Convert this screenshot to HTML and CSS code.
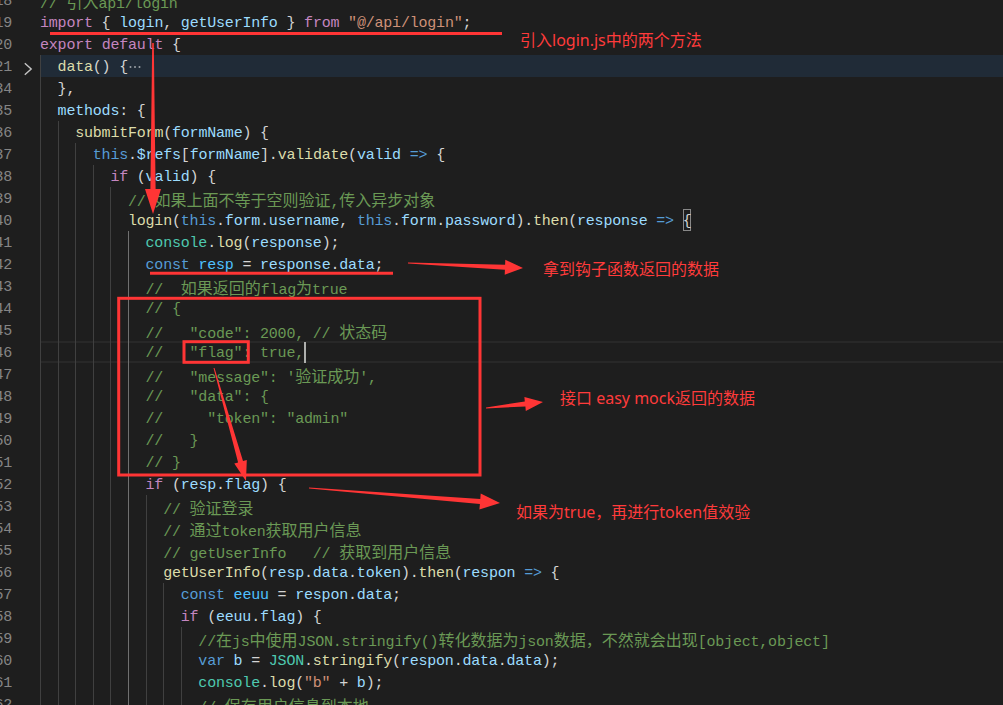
FILE: index.html
```html
<!DOCTYPE html>
<html lang="zh-CN">
<head>
<meta charset="utf-8">
<title>login.vue</title>
<link rel="stylesheet" href="styles.css">
</head>
<body>
<div class="editor">
<div class="row"><span class="ln"><span class="num">18</span></span><span class="fold"></span><span class="code"><span class="c">// <span class="cj">引入</span>api/login</span></span></div>
<div class="row"><span class="ln"><span class="num">19</span></span><span class="fold"></span><span class="code"><span class="k">import</span> { <span class="v">login</span>, <span class="v">getUserInfo</span> } <span class="k">from</span> <span class="s">"@/api/login"</span>;</span></div>
<div class="row"><span class="ln"><span class="num">20</span></span><span class="fold"></span><span class="code"><span class="k">export</span> <span class="k">default</span> {</span></div>
<div class="row"><span class="ln"><span class="num">21</span></span><span class="fold"><svg class="chev" width="10" height="14" viewBox="0 0 10 14"><path d="M1.8 1.2 L8.2 7 L1.8 12.8" fill="none" stroke="#c5c5c5" stroke-width="1.4"/></svg></span><span class="code hl"><i class="g"></i><span class="f">data</span>() {<svg class="dots" width="14" height="22" viewBox="0 0 14 22"><circle cx="2.5" cy="12" r="1" fill="#9aa0a6"/><circle cx="7" cy="12" r="1" fill="#9aa0a6"/><circle cx="11.5" cy="12" r="1" fill="#9aa0a6"/></svg></span></div>
<div class="row"><span class="ln"><span class="num">34</span></span><span class="fold"></span><span class="code"><i class="g"></i>},</span></div>
<div class="row"><span class="ln"><span class="num">35</span></span><span class="fold"></span><span class="code"><i class="g"></i><span class="v">methods</span>: {</span></div>
<div class="row"><span class="ln"><span class="num">36</span></span><span class="fold"></span><span class="code"><i class="g"></i><i class="g"></i><span class="f">submitForm</span>(<span class="v">formName</span>) {</span></div>
<div class="row"><span class="ln"><span class="num">37</span></span><span class="fold"></span><span class="code"><i class="g"></i><i class="g"></i><i class="g"></i><span class="b">this</span>.<span class="v">$refs</span>[<span class="v">formName</span>].<span class="f">validate</span>(<span class="v">valid</span> <span class="b">=&gt;</span> {</span></div>
<div class="row"><span class="ln"><span class="num">38</span></span><span class="fold"></span><span class="code"><i class="g"></i><i class="g"></i><i class="g"></i><i class="g"></i><span class="k">if</span> (<span class="v">valid</span>) {</span></div>
<div class="row"><span class="ln"><span class="num">39</span></span><span class="fold"></span><span class="code"><i class="g"></i><i class="g"></i><i class="g"></i><i class="g"></i><i class="g"></i><span class="c">// <span class="cj">如果上面不等于空则验证</span>,<span class="cj">传入异步对象</span></span></span></div>
<div class="row"><span class="ln"><span class="num">40</span></span><span class="fold"></span><span class="code"><i class="g"></i><i class="g"></i><i class="g"></i><i class="g"></i><i class="g"></i><span class="f">login</span>(<span class="b">this</span>.<span class="v">form</span>.<span class="v">username</span>, <span class="b">this</span>.<span class="v">form</span>.<span class="v">password</span>).<span class="f">then</span>(<span class="v">response</span> <span class="b">=&gt;</span> <span class="bm">{</span></span></div>
<div class="row"><span class="ln"><span class="num">41</span></span><span class="fold"></span><span class="code"><i class="g"></i><i class="g"></i><i class="g"></i><i class="g"></i><i class="g"></i><i class="g a"></i><span class="t">console</span>.<span class="f">log</span>(<span class="v">response</span>);</span></div>
<div class="row"><span class="ln"><span class="num">42</span></span><span class="fold"></span><span class="code"><i class="g"></i><i class="g"></i><i class="g"></i><i class="g"></i><i class="g"></i><i class="g a"></i><span class="b">const</span> <span class="cn">resp</span> = <span class="v">response</span>.<span class="v">data</span>;</span></div>
<div class="row"><span class="ln"><span class="num">43</span></span><span class="fold"></span><span class="code"><i class="g"></i><i class="g"></i><i class="g"></i><i class="g"></i><i class="g"></i><i class="g a"></i><span class="c">//  <span class="cj">如果返回的</span>flag<span class="cj">为</span>true</span></span></div>
<div class="row"><span class="ln"><span class="num">44</span></span><span class="fold"></span><span class="code"><i class="g"></i><i class="g"></i><i class="g"></i><i class="g"></i><i class="g"></i><i class="g a"></i><span class="c">// {</span></span></div>
<div class="row"><span class="ln"><span class="num">45</span></span><span class="fold"></span><span class="code"><i class="g"></i><i class="g"></i><i class="g"></i><i class="g"></i><i class="g"></i><i class="g a"></i><span class="c">//   "code": 2000, // <span class="cj">状态码</span></span></span></div>
<div class="row"><span class="ln"><span class="num">46</span></span><span class="fold"></span><span class="code cur"><i class="g"></i><i class="g"></i><i class="g"></i><i class="g"></i><i class="g"></i><i class="g a"></i><span class="c">//   "flag": true,</span><i class="caret"></i></span></div>
<div class="row"><span class="ln"><span class="num">47</span></span><span class="fold"></span><span class="code"><i class="g"></i><i class="g"></i><i class="g"></i><i class="g"></i><i class="g"></i><i class="g a"></i><span class="c">//   "message": '<span class="cj">验证成功</span>',</span></span></div>
<div class="row"><span class="ln"><span class="num">48</span></span><span class="fold"></span><span class="code"><i class="g"></i><i class="g"></i><i class="g"></i><i class="g"></i><i class="g"></i><i class="g a"></i><span class="c">//   "data": {</span></span></div>
<div class="row"><span class="ln"><span class="num">49</span></span><span class="fold"></span><span class="code"><i class="g"></i><i class="g"></i><i class="g"></i><i class="g"></i><i class="g"></i><i class="g a"></i><span class="c">//     "token": "admin"</span></span></div>
<div class="row"><span class="ln"><span class="num">50</span></span><span class="fold"></span><span class="code"><i class="g"></i><i class="g"></i><i class="g"></i><i class="g"></i><i class="g"></i><i class="g a"></i><span class="c">//   }</span></span></div>
<div class="row"><span class="ln"><span class="num">51</span></span><span class="fold"></span><span class="code"><i class="g"></i><i class="g"></i><i class="g"></i><i class="g"></i><i class="g"></i><i class="g a"></i><span class="c">// }</span></span></div>
<div class="row"><span class="ln"><span class="num">52</span></span><span class="fold"></span><span class="code"><i class="g"></i><i class="g"></i><i class="g"></i><i class="g"></i><i class="g"></i><i class="g a"></i><span class="k">if</span> (<span class="v">resp</span>.<span class="v">flag</span>) {</span></div>
<div class="row"><span class="ln"><span class="num">53</span></span><span class="fold"></span><span class="code"><i class="g"></i><i class="g"></i><i class="g"></i><i class="g"></i><i class="g"></i><i class="g a"></i><i class="g"></i><span class="c">// <span class="cj">验证登录</span></span></span></div>
<div class="row"><span class="ln"><span class="num">54</span></span><span class="fold"></span><span class="code"><i class="g"></i><i class="g"></i><i class="g"></i><i class="g"></i><i class="g"></i><i class="g a"></i><i class="g"></i><span class="c">// <span class="cj">通过</span>token<span class="cj">获取用户信息</span></span></span></div>
<div class="row"><span class="ln"><span class="num">55</span></span><span class="fold"></span><span class="code"><i class="g"></i><i class="g"></i><i class="g"></i><i class="g"></i><i class="g"></i><i class="g a"></i><i class="g"></i><span class="c">// getUserInfo   // <span class="cj">获取到用户信息</span></span></span></div>
<div class="row"><span class="ln"><span class="num">56</span></span><span class="fold"></span><span class="code"><i class="g"></i><i class="g"></i><i class="g"></i><i class="g"></i><i class="g"></i><i class="g a"></i><i class="g"></i><span class="f">getUserInfo</span>(<span class="v">resp</span>.<span class="v">data</span>.<span class="v">token</span>).<span class="f">then</span>(<span class="v">respon</span> <span class="b">=&gt;</span> {</span></div>
<div class="row"><span class="ln"><span class="num">57</span></span><span class="fold"></span><span class="code"><i class="g"></i><i class="g"></i><i class="g"></i><i class="g"></i><i class="g"></i><i class="g a"></i><i class="g"></i><i class="g"></i><span class="b">const</span> <span class="cn">eeuu</span> = <span class="v">respon</span>.<span class="v">data</span>;</span></div>
<div class="row"><span class="ln"><span class="num">58</span></span><span class="fold"></span><span class="code"><i class="g"></i><i class="g"></i><i class="g"></i><i class="g"></i><i class="g"></i><i class="g a"></i><i class="g"></i><i class="g"></i><span class="k">if</span> (<span class="v">eeuu</span>.<span class="v">flag</span>) {</span></div>
<div class="row"><span class="ln"><span class="num">59</span></span><span class="fold"></span><span class="code"><i class="g"></i><i class="g"></i><i class="g"></i><i class="g"></i><i class="g"></i><i class="g a"></i><i class="g"></i><i class="g"></i><i class="g"></i><span class="c">//<span class="cj">在</span>js<span class="cj">中使用</span>JSON.stringify()<span class="cj">转化数据为</span>json<span class="cj">数据，不然就会出现</span>[object,object]</span></span></div>
<div class="row"><span class="ln"><span class="num">60</span></span><span class="fold"></span><span class="code"><i class="g"></i><i class="g"></i><i class="g"></i><i class="g"></i><i class="g"></i><i class="g a"></i><i class="g"></i><i class="g"></i><i class="g"></i><span class="b">var</span> <span class="v">b</span> = <span class="t">JSON</span>.<span class="f">stringify</span>(<span class="v">respon</span>.<span class="v">data</span>.<span class="v">data</span>);</span></div>
<div class="row"><span class="ln"><span class="num">61</span></span><span class="fold"></span><span class="code"><i class="g"></i><i class="g"></i><i class="g"></i><i class="g"></i><i class="g"></i><i class="g a"></i><i class="g"></i><i class="g"></i><i class="g"></i><span class="t">console</span>.<span class="f">log</span>(<span class="s">"b"</span> + <span class="v">b</span>);</span></div>
<div class="row"><span class="ln"><span class="num">62</span></span><span class="fold"></span><span class="code"><i class="g"></i><i class="g"></i><i class="g"></i><i class="g"></i><i class="g"></i><i class="g a"></i><i class="g"></i><i class="g"></i><i class="g"></i><span class="c">// <span class="cj">保存用户信息到本地</span></span></span></div>
</div>

<div class="marks">
<svg class="ink" width="1003" height="705" viewBox="0 0 1003 705">
<g fill="none" stroke="#ff3535" stroke-width="3">
<line x1="50" y1="33.5" x2="502" y2="33.5"/>
<line x1="150" y1="273.3" x2="393" y2="273.3"/>
<rect x="118.7" y="298.3" width="361.3" height="176.7"/>
<rect x="184" y="341.7" width="64.3" height="20.6"/>
</g>
<g fill="#ff3535">
<polygon points="153.8,43 155.6,189 161,189 153,214 145,189 150.4,189 152.2,43"/>
<polygon points="408,263.5 504.9,269.7 504.7,274.7 523,268 505.3,259.7 505.1,264.7 408,262.5"/>
<polygon points="213.5,368.1 238.1,462.4 234.3,463.5 246,481 246.8,460 243,461.1 214.5,367.9"/>
<polygon points="486,408.5 525.4,406.4 525.8,410.9 543,402 524.4,396.9 524.8,401.4 486,407.5"/>
<polygon points="309,488.5 479.9,503.9 479.4,509.4 500,503 480.7,493.5 480.3,498.9 309,487.5"/>
</g>
</svg>
<div class="note n1">引入login.js中的两个方法</div>
<div class="note n2">拿到钩子函数返回的数据</div>
<div class="note n3">接口 easy mock返回的数据</div>
<div class="note n4">如果为true，再进行token值效验</div>
</div>
</body>
</html>
```

FILE: styles.css
```css
html, body {
  margin: 0;
  padding: 0;
  background: #1e1e1e;
}

body {
  width: 1003px;
  height: 705px;
  overflow: hidden;
  position: relative;
}

.editor {
  display: flex;
  flex-direction: column;
  margin-top: -11px;
  font-family: "Liberation Mono", "Noto Sans CJK SC", monospace;
  font-size: 15px;
  letter-spacing: -0.2px;
}

.row {
  display: flex;
  height: 22px;
  flex: none;
}

.ln {
  width: 12px;
  flex: none;
  display: flex;
  justify-content: flex-end;
  overflow: hidden;
  color: #858585;
  line-height: 25px;
}

.num {
  white-space: nowrap;
}

.fold {
  width: 28px;
  flex: none;
  display: flex;
  align-items: flex-start;
  padding-left: 11px;
  box-sizing: border-box;
}

.chev {
  margin-top: 7px;
  display: block;
}

.code {
  flex: 1;
  min-width: 0;
  white-space: pre;
  color: #d4d4d4;
  line-height: 25px;
}

.code.hl {
  background: #202b37;
}

.code.cur {
  box-shadow: inset 0 2px 0 #282828, inset 0 -2px 0 #282828;
}

.g {
  display: inline-block;
  width: 17.6px;
  height: 22px;
  vertical-align: top;
  box-sizing: border-box;
  border-left: 1px solid #404040;
}

.g.a {
  border-left-color: #707070;
}

.dots {
  display: inline-block;
  vertical-align: top;
}

.bm {
  display: inline-block;
  height: 22px;
  vertical-align: top;
  box-shadow: inset 0 0 0 1px #888888;
}

.caret {
  display: inline-block;
  width: 2px;
  height: 21px;
  margin-top: 1px;
  margin-right: -2px;
  vertical-align: top;
  background: #aeafad;
}

.cj {
  font-family: "Noto Sans CJK SC", sans-serif;
  font-size: 16px;
  letter-spacing: 0;
}

.k { color: #c586c0; }
.b { color: #569cd6; }
.v { color: #9cdcfe; }
.cn { color: #4fc1ff; }
.f { color: #dcdcaa; }
.t { color: #4ec9b0; }
.s { color: #ce9178; }
.c { color: #6a9955; }

.marks {
  position: absolute;
  left: 0;
  top: 0;
  width: 1003px;
  height: 705px;
  pointer-events: none;
}

.ink {
  display: block;
}

.note {
  position: absolute;
  color: #ff3b3b;
  font-family: "Noto Sans", "Noto Sans CJK SC", sans-serif;
  font-size: 16px;
  line-height: 22px;
  white-space: nowrap;
}

.n1 { left: 520px; top: 29px; }
.n2 { left: 543px; top: 258px; }
.n3 { left: 560px; top: 387px; }
.n4 { left: 516px; top: 501px; }
```
